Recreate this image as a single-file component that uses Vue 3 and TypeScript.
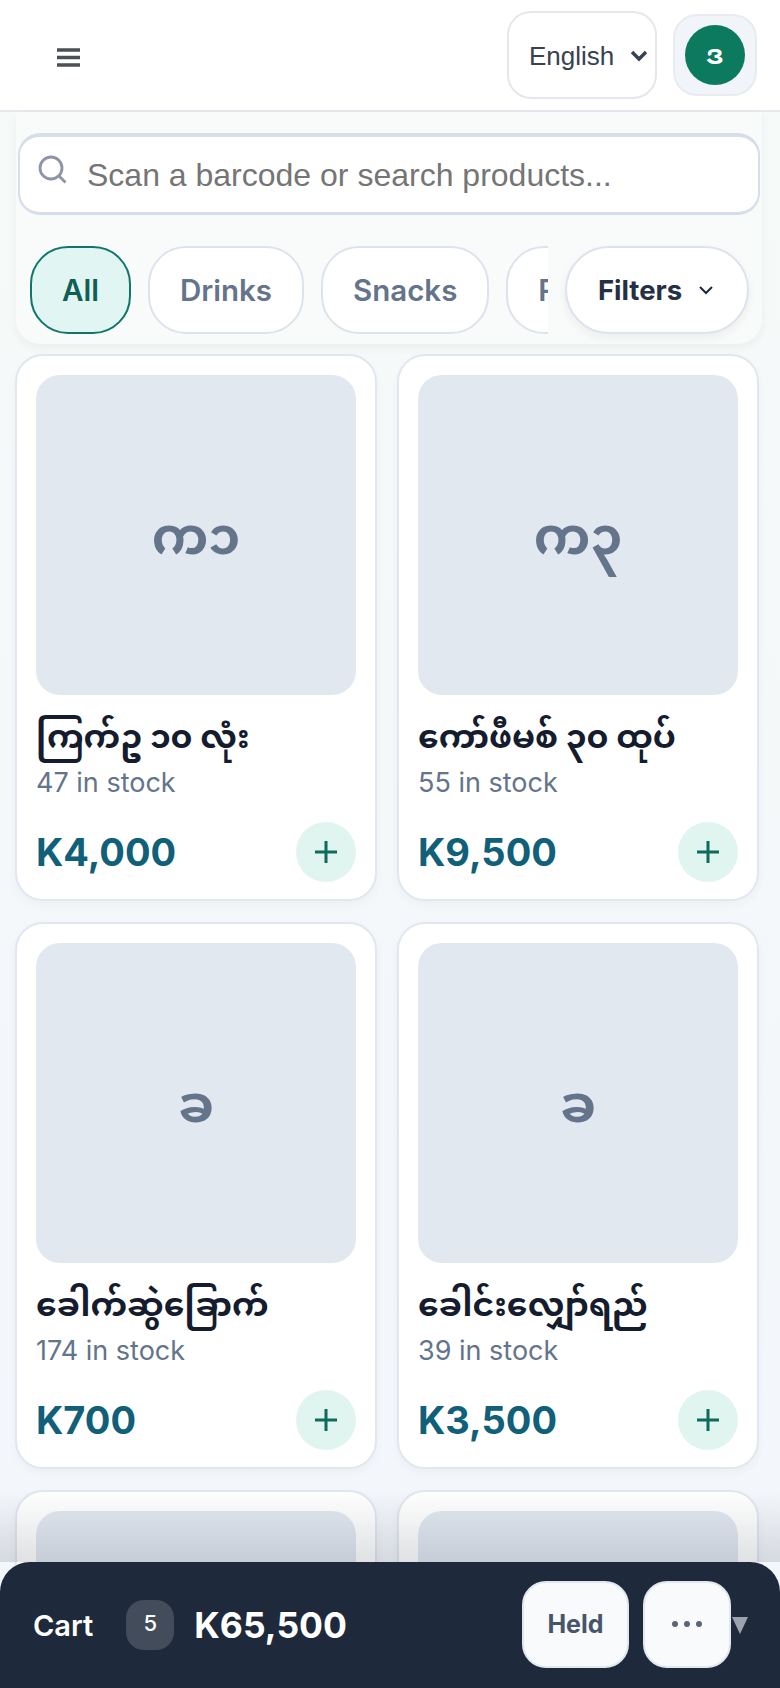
<script setup lang="ts">
interface Product { initials: string; name: string; stock: number; price: string }
const products: Product[] = [
  { initials: 'က၁', name: 'ကြက်ဥ ၁၀ လုံး', stock: 47, price: 'K4,000' },
  { initials: 'က၃', name: 'ကော်ဖီမစ် ၃၀ ထုပ်', stock: 55, price: 'K9,500' },
  { initials: 'ခ', name: 'ခေါက်ဆွဲခြောက်', stock: 174, price: 'K700' },
  { initials: 'ခ', name: 'ခေါင်းလျှော်ရည်', stock: 39, price: 'K3,500' },
  { initials: 'ခ', name: 'ခေါင်းလျှော်ရည်', stock: 39, price: 'K3,500' },
  { initials: 'ခ', name: 'ခေါင်းလျှော်ရည်', stock: 39, price: 'K3,500' }
]
const categories = ['Drinks', 'Snacks', 'Rice']
</script>

<template>
  <div class="page">
    <header class="top">
      <svg class="burger" width="23" height="19" viewBox="0 0 23 19" aria-label="Menu"><path d="M0 2h23M0 9.500h23M0 17h23" stroke="#4b5055" stroke-width="3.400" /></svg>
      <div class="top-right">
        <div class="lang">
          <span>English</span>
          <svg width="18" height="12" viewBox="0 0 18 12"><path d="M2 2l7 7 7-7" fill="none" stroke="#374151" stroke-width="3.400" /></svg>
        </div>
        <div class="user"><div class="avatar">ဒ</div></div>
      </div>
    </header>

    <section class="panel">
      <div class="search">
        <svg width="32" height="32" viewBox="0 0 32 32" class="lens"><circle cx="13" cy="13" r="11" fill="none" stroke="#8b95a7" stroke-width="2.800" /><path d="M21 21l6.500 6.500" stroke="#8b95a7" stroke-width="2.800" /></svg>
        <span class="placeholder">Scan a barcode or search products...</span>
      </div>
      <div class="filter-row">
        <div class="chips">
          <span class="chip active">All</span>
          <span v-for="c in categories" :key="c" class="chip">{{ c }}</span>
        </div>
        <div class="filters">
          <span>Filters</span>
          <svg width="16" height="10" viewBox="0 0 16 10"><path d="M2 2l6 6 6-6" fill="none" stroke="#1e293b" stroke-width="2" /></svg>
        </div>
      </div>
    </section>

    <main class="grid">
      <article v-for="(p, i) in products" :key="i" class="card">
        <div class="thumb">{{ p.initials }}</div>
        <h3 class="name">{{ p.name }}</h3>
        <p class="stock">{{ p.stock }} in stock</p>
        <div class="bottom">
          <span class="price">{{ p.price }}</span>
          <button class="add">
            <svg width="24" height="24" viewBox="0 0 24 24"><path d="M12 1v22M1 12h22" stroke="#0f6b5c" stroke-width="3" /></svg>
          </button>
        </div>
      </article>
    </main>

    <div class="fade"></div>
    <footer class="cart">
      <span class="cart-label">Cart</span>
      <span class="badge">5</span>
      <span class="total">K65,500</span>
      <div class="cart-actions">
        <button class="cart-btn held">Held</button>
        <button class="cart-btn more">
          <svg width="32" height="8" viewBox="0 0 32 8"><circle cx="4" cy="4" r="3" fill="#5b6577" /><circle cx="16" cy="4" r="3" fill="#5b6577" /><circle cx="28" cy="4" r="3" fill="#5b6577" /></svg>
        </button>
        <svg class="tri" width="16" height="17" viewBox="0 0 16 17"><path d="M0 0h16L8 17z" fill="#9ca3af" /></svg>
      </div>
    </footer>
  </div>
</template>

<style>
html, body { margin: 0; overflow: hidden; }
</style>

<style scoped>
* { box-sizing: border-box; }
.page {
  position: relative;
  width: 780px;
  height: 1688px;
  overflow: hidden;
  display: flex;
  flex-direction: column;
  font-family: Inter, "Noto Sans", "Noto Sans Myanmar", sans-serif;
  background: linear-gradient(180deg, #f6faf8 0%, #f3f6fb 100%);
}
.top {
  flex: none;
  height: 112px;
  display: flex;
  align-items: center;
  justify-content: space-between;
  padding: 0 23px 0 57px;
  background: #fff;
  border-bottom: 2px solid #e5e9ee;
}
.burger { margin-top: 4px; }
.top-right { display: flex; align-items: center; gap: 16px; }
.lang {
  width: 150px;
  height: 88px;
  border: 2px solid #e5e7eb;
  border-radius: 24px;
  background: #fff;
  display: flex;
  align-items: center;
  padding: 2px 0 0 20px;
  gap: 16px;
  font-family: "Liberation Sans", Arial, sans-serif;
  font-size: 26px;
  color: #374151;
  white-space: nowrap;
}
.user {
  width: 84px;
  height: 82px;
  border: 2px solid #e8ecf2;
  border-radius: 24px;
  background: #f1f5f9;
  display: flex;
  align-items: center;
  justify-content: center;
}
.avatar {
  width: 60px;
  height: 60px;
  padding-top: 5px;
  border-radius: 50%;
  background: #0c7a5f;
  color: #fff;
  font-size: 26px;
  font-weight: 700;
  display: flex;
  align-items: center;
  justify-content: center;
}
.panel {
  flex: none;
  width: 746px;
  height: 232px;
  margin: 0 0 10px 16px;
  padding: 21px 2px 0;
  background: #f8fbf9;
  border-radius: 0 0 24px 24px;
  box-shadow: 0 4px 10px rgba(30, 41, 59, .05);
}
.search {
  height: 82px;
  display: flex;
  align-items: center;
  gap: 17px;
  padding: 2px 20px 0 18px;
  background: #fff;
  border: 2px solid #d6deea;
  border-top-width: 4px;
  border-bottom-width: 3px;
  border-radius: 22px;
}
.lens { margin-top: -10px; }
.placeholder {
  font-family: "Liberation Sans", Arial, sans-serif;
  font-size: 32px;
  color: #757575;
  white-space: nowrap;
}
.filter-row {
  position: relative;
  display: flex;
  margin-top: 31px;
  padding-left: 12px;
}
.chips {
  width: 518px;
  display: flex;
  gap: 17px;
  overflow: hidden;
}
.chip {
  flex: none;
  height: 88px;
  padding: 0 30px;
  display: flex;
  align-items: center;
  border: 2px solid #dde3ed;
  border-radius: 38px;
  background: #fff;
  color: #64748b;
  font-size: 29.500px;
  font-weight: 600;
}
.chip.active {
  background: #e1f5f2;
  border-color: #0f766e;
  color: #0f5f55;
}
.filters {
  margin-left: 17px;
  flex: none;
  width: 184px;
  height: 88px;
  display: flex;
  align-items: center;
  justify-content: center;
  gap: 16px;
  padding-right: 2px;
  background: #fff;
  border: 2px solid #dde3ed;
  border-radius: 44px;
  box-shadow: 0 4px 10px rgba(30, 41, 59, .06);
  color: #253044;
  font-size: 27.500px;
  font-weight: 700;
}
.grid {
  display: grid;
  grid-template-columns: 362px 362px;
  grid-auto-rows: 547px;
  gap: 21px 20px;
  padding: 0 15px;
}
.card {
  background: #fff;
  border: 2px solid #e2e6f0;
  border-radius: 28px;
  padding: 19px 19px 0;
  box-shadow: 0 4px 10px rgba(30, 41, 59, .04);
  display: flex;
  flex-direction: column;
}
.thumb {
  flex: none;
  width: 320px;
  height: 320px;
  border-radius: 24px;
  background: #e2e8f0;
  color: #64748b;
  display: flex;
  align-items: center;
  justify-content: center;
  padding-top: 14px;
  font-size: 51px;
  font-weight: 700;
}
.name {
  margin: 15.500px 0 0;
  font-size: 33px;
  font-weight: 700;
  line-height: 50px;
  color: #141c2e;
  white-space: nowrap;
}
.stock {
  margin: 5px 0 0;
  font-size: 27px;
  line-height: 34px;
  color: #64748b;
}
.bottom {
  margin-top: 22px;
  display: flex;
  align-items: center;
  justify-content: space-between;
}
.price { font-size: 38px; font-weight: 700; color: #0f6078; }
.add {
  width: 60px;
  height: 60px;
  border: 0;
  padding: 0;
  border-radius: 50%;
  background: #e1f5f0;
  display: flex;
  align-items: center;
  justify-content: center;
}
.fade {
  position: absolute;
  left: 0;
  right: 0;
  bottom: 126px;
  height: 72px;
  background: linear-gradient(180deg, rgba(30, 41, 59, 0), rgba(30, 41, 59, .14));
}
.cart {
  position: absolute;
  left: 0;
  right: 0;
  bottom: 0;
  height: 126px;
  background: #1e293b;
  border-radius: 30px 30px 0 0;
  display: flex;
  align-items: center;
  padding: 0 32px 0 33px;
  color: #fff;
}
.cart-label { font-size: 29px; font-weight: 600; }
.badge {
  margin-left: 33px;
  flex: none;
  width: 48px;
  height: 50px;
  border-radius: 18px;
  padding-bottom: 4px;
  background: #434c5b;
  display: flex;
  align-items: center;
  justify-content: center;
  font-size: 22px;
  font-weight: 500;
}
.total { margin-left: 20px; font-size: 35.500px; font-weight: 700; }
.cart-actions { margin-left: auto; display: flex; align-items: center; }
.cart-btn {
  height: 87px;
  margin-top: -2px;
  border: 2px solid #e2e8f0;
  border-radius: 24px;
  background: #f8fafc;
  color: #475569;
  display: flex;
  align-items: center;
  justify-content: center;
  font-family: inherit;
  font-size: 25px;
  font-weight: 700;
  padding: 0;
}
.held { width: 107px; }
.more { width: 88px; margin-left: 14px; }
.tri { margin-left: 1px; }
</style>
